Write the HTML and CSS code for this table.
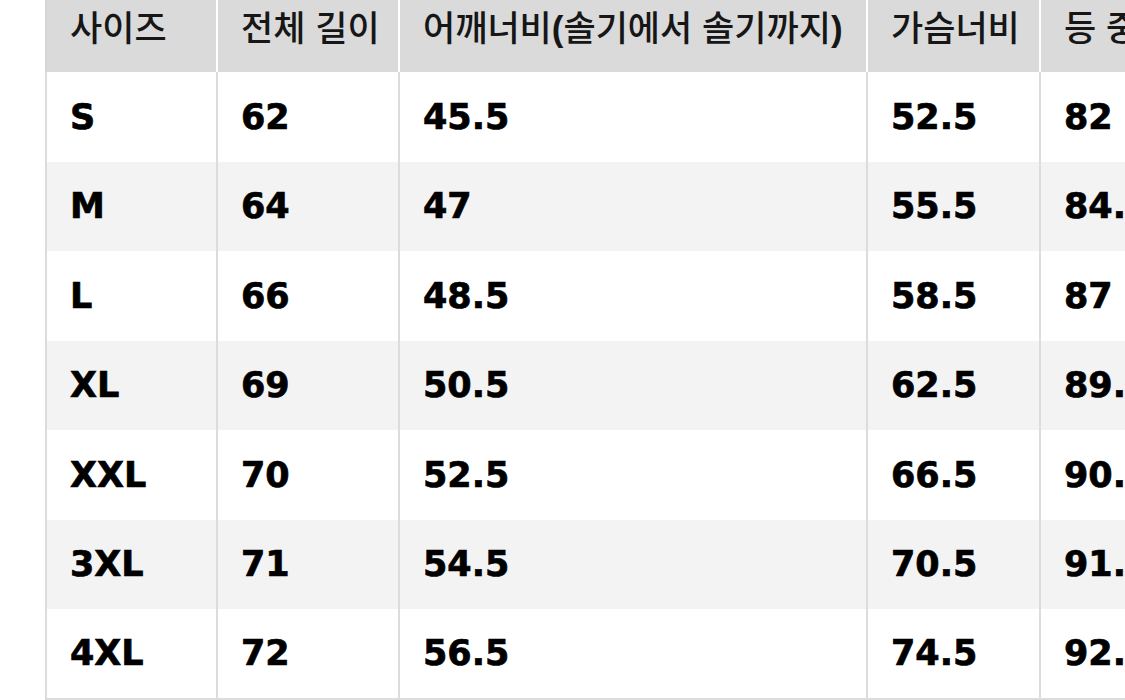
FILE: index.html
```html
<!DOCTYPE html>
<html lang="ko">
<head>
<meta charset="utf-8">
<title>사이즈 표</title>
<link rel="stylesheet" href="styles.css">
</head>
<body>
<div class="wrap">
<table class="size-table">
  <colgroup>
    <col class="c1"><col class="c2"><col class="c3"><col class="c4"><col class="c5">
  </colgroup>
  <thead>
    <tr>
      <th>사이즈</th>
      <th>전체 길이</th>
      <th>어깨너비<span class="paren">(</span>솔기에서 솔기까지<span class="paren">)</span></th>
      <th>가슴너비</th>
      <th>등 중심 길이</th>
    </tr>
  </thead>
  <tbody>
    <tr><td>S</td><td>62</td><td>45.5</td><td>52.5</td><td>82</td></tr>
    <tr><td>M</td><td>64</td><td>47</td><td>55.5</td><td>84.5</td></tr>
    <tr><td>L</td><td>66</td><td>48.5</td><td>58.5</td><td>87</td></tr>
    <tr><td>XL</td><td>69</td><td>50.5</td><td>62.5</td><td>89.5</td></tr>
    <tr><td>XXL</td><td>70</td><td>52.5</td><td>66.5</td><td>90.5</td></tr>
    <tr><td>3XL</td><td>71</td><td>54.5</td><td>70.5</td><td>91.5</td></tr>
    <tr><td>4XL</td><td>72</td><td>56.5</td><td>74.5</td><td>92.5</td></tr>
  </tbody>
</table>
</div>
</body>
</html>
```
FILE: styles.css
```css
html, body {
  margin: 0;
  padding: 0;
  background: #ffffff;
  overflow: hidden;
}

.wrap {
  width: 1125px;
  height: 700px;
  overflow: hidden;
  padding-left: 45px;
  box-sizing: border-box;
}

.size-table {
  border-collapse: collapse;
  table-layout: fixed;
  width: 1260px;
}

.c1 { width: 171px; }
.c2 { width: 182px; }
.c3 { width: 468px; }
.c4 { width: 173px; }
.c5 { width: 266px; }

.size-table th {
  height: 72px;
  box-sizing: border-box;
  padding: 0 0 0 23px;
  vertical-align: top;
  text-align: left;
  white-space: nowrap;
  background: #dadada;
  color: #161616;
  font-family: "Noto Sans CJK KR", "Noto Sans", sans-serif;
  font-weight: 500;
  font-size: 35px;
  line-height: 51px;
  border-left: 2px solid #ffffff;
}

.size-table th:first-child {
  border-left: 2px solid #d4d4d4;
}

.paren {
  font-family: "Liberation Sans", Arial, sans-serif;
  font-weight: 700;
}

.size-table td {
  height: 89.5px;
  box-sizing: border-box;
  padding: 0 0 0 23px;
  vertical-align: middle;
  text-align: left;
  white-space: nowrap;
  font-family: "DejaVu Sans", sans-serif;
  font-weight: 700;
  font-size: 35px;
  color: #000000;
  -webkit-text-stroke: 0.7px #000000;
  border-left: 2px solid #dcdcdc;
}

.size-table tbody tr:nth-child(even) td {
  background: #f3f3f3;
}

.size-table tbody tr:last-child td {
  border-bottom: 2px solid #dcdcdc;
}
```
